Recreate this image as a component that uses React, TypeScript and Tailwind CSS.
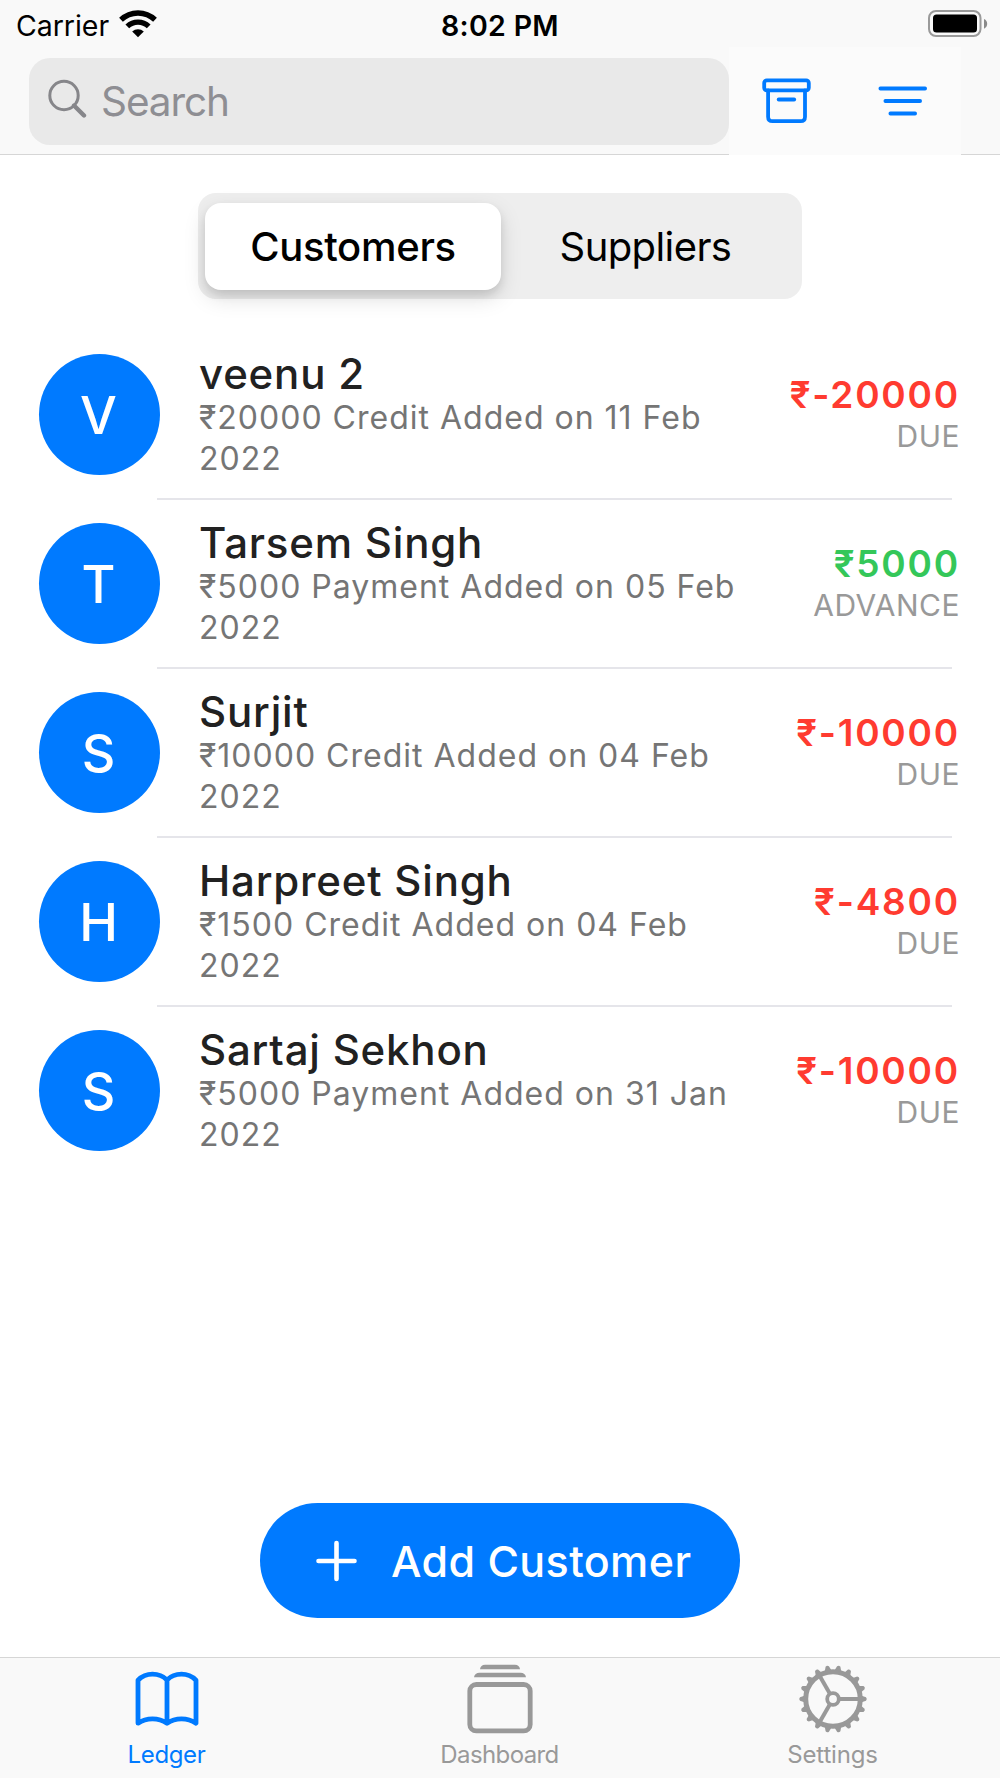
import { clsx } from 'clsx';

interface Customer {
  name: string;
  note: string;
  amount: string;
  status: 'DUE' | 'ADVANCE';
}

const customers: Customer[] = [
  { name: 'veenu 2', note: '₹20000 Credit Added on 11 Feb 2022', amount: '₹-20000', status: 'DUE' },
  { name: 'Tarsem Singh', note: '₹5000 Payment Added on 05 Feb 2022', amount: '₹5000', status: 'ADVANCE' },
  { name: 'Surjit', note: '₹10000 Credit Added on 04 Feb 2022', amount: '₹-10000', status: 'DUE' },
  { name: 'Harpreet Singh', note: '₹1500 Credit Added on 04 Feb 2022', amount: '₹-4800', status: 'DUE' },
  { name: 'Sartaj Sekhon', note: '₹5000 Payment Added on 31 Jan 2022', amount: '₹-10000', status: 'DUE' },
];

const gearTeeth = Array.from({ length: 18 }, (_, i) => i * 20);

function WifiIcon() {
  return (
    <svg width="38" height="28" viewBox="0 0 38 28" fill="none" stroke="#000">
      <path d="M2 9.8 A24.5 24.5 0 0 1 36 9.8" strokeWidth="5.4" />
      <path d="M8.3 16.4 A15.5 15.5 0 0 1 29.7 16.4" strokeWidth="5.4" />
      <path d="M13.2 21.5 A8.6 8.6 0 0 1 24.8 21.5 L19 27.2 Z" fill="#000" stroke="none" />
    </svg>
  );
}

function BatteryIcon() {
  return (
    <svg width="60" height="28" viewBox="0 0 60 28">
      <rect x="1" y="1" width="51.5" height="25" rx="7" fill="none" stroke="#9a9a9a" strokeWidth="2" />
      <rect x="5" y="4.5" width="44" height="18" rx="3.5" fill="#000" />
      <path d="M56 9 Q59.2 10.5 59.2 13.8 Q59.2 17.2 56 18.7 Z" fill="#8a8a8a" />
    </svg>
  );
}

function SearchIcon() {
  return (
    <svg width="40" height="40" viewBox="0 0 40 40" fill="none" stroke="#86868a" strokeLinecap="round">
      <circle cx="17" cy="16.5" r="14.2" strokeWidth="3" />
      <path d="M27 26.5 L37 36.5" strokeWidth="4.4" />
    </svg>
  );
}

function ArchiveIcon() {
  return (
    <svg width="50" height="46" viewBox="0 0 50 46" fill="none" stroke="#007aff" strokeWidth="3.8" strokeLinecap="round">
      <rect x="2.2" y="2.4" width="44.6" height="10" rx="2.6" />
      <path d="M6.1 12.4 V38.7 Q6.1 43.2 10.6 43.2 H38.6 Q43 43.2 43 38.7 V12.4" />
      <path d="M16.7 21.5 H32.2" />
    </svg>
  );
}

function FilterIcon() {
  return (
    <svg width="50" height="30" viewBox="0 0 50 30" fill="none" stroke="#007aff" strokeWidth="3.8" strokeLinecap="round">
      <path d="M2.4 2.5 H47.1 M7.4 15 H42.1 M12.4 27.5 H37.1" />
    </svg>
  );
}

function BookIcon() {
  return (
    <svg width="64" height="56" viewBox="0 0 64 56" fill="none" stroke="#007aff" strokeWidth="4.8" strokeLinejoin="round">
      <path d="M32 9 C28 5 23 3.2 17.5 3.2 C12 3.2 7 5.2 3 9.2 V52.2 C7 49.4 12 47.8 17.5 47.8 C23 47.8 28 49.4 32 52.2 C36 49.4 41 47.8 46.5 47.8 C52 47.8 57 49.4 61 52.2 V9.2 C57 5.2 52 3.2 46.5 3.2 C41 3.2 36 5 32 9 Z M32 9 V52" />
    </svg>
  );
}

function StackIcon() {
  return (
    <svg width="66" height="70" viewBox="0 0 66 70" fill="#999">
      <path d="M13 5.3 Q13.6 .8 18 .8 H48 Q52.4 .8 53 5.3 Z" />
      <path d="M7 13.3 Q7.8 8.8 12.5 8.8 H53.5 Q58.2 8.8 59 13.3 Z" />
      <rect x="2.8" y="20.5" width="60.4" height="46.4" rx="6.5" fill="none" stroke="#999" strokeWidth="4.8" />
    </svg>
  );
}

function GearIcon() {
  return (
    <svg width="70" height="70" viewBox="-35 -35 70 70" fill="none" stroke="#999">
      <circle r="27.3" strokeWidth="5" />
      <circle r="5.8" strokeWidth="3.8" />
      {[0, 120, 240].map((angle) => (
        <path key={angle} d="M7 0 H26" strokeWidth="4" transform={`rotate(${angle})`} />
      ))}
      {gearTeeth.map((angle) => (
        <path key={angle} d="M28 -3.6 L33 -1.7 Q34.6 0 33 1.7 L28 3.6 Z" fill="#999" stroke="none" transform={`rotate(${angle})`} />
      ))}
    </svg>
  );
}

function StatusBar() {
  return (
    <div className="grid h-[47px] grid-cols-3 items-center pr-[12px] pl-[16px] text-[28.5px] leading-[40px]">
      <div className="flex items-center gap-[10px]">
        <span className="pt-[4px] tracking-[-0.05px]">Carrier</span>
        <WifiIcon />
      </div>
      <span className="pt-[4px] pr-[4px] text-center font-semibold tracking-[0.3px]">8:02 PM</span>
      <div className="flex justify-end pt-[1px]">
        <BatteryIcon />
      </div>
    </div>
  );
}

function Header() {
  return (
    <header className="h-[155px] bg-[#f9f9f9]">
      <StatusBar />
      <div className="flex h-[108px]">
        <div className="w-[729px] border-b border-[#d6d6d6] pt-[11px] pl-[29px]">
          <div className="flex h-[87px] items-center rounded-[21px] bg-[#e9e9e9] pl-[18px] text-[#8e8e93]">
            <div className="-mt-[6px]">
              <SearchIcon />
            </div>
            <span className="ml-[14px] pt-[2px] text-[40.5px] tracking-[-1.1px]">Search</span>
          </div>
        </div>
        <div className="flex w-[232px] items-center bg-[#fbfbfb] pl-[33px]">
          <ArchiveIcon />
          <div className="ml-[66px]">
            <FilterIcon />
          </div>
        </div>
        <div className="flex-1 border-b border-[#d6d6d6]" />
      </div>
    </header>
  );
}

function Segments() {
  return (
    <div className="mx-auto mt-[38px] flex h-[106px] w-[604px] items-center rounded-[18px] bg-[#eee] px-[7px] text-[40px] text-black">
      <button className="h-[87px] w-[296px] rounded-[16px] bg-white pt-[2px] font-medium tracking-[-0.3px] shadow-[0_8px_22px_rgba(0,0,0,0.13),0_5px_8px_rgba(0,0,0,0.1)]">
        Customers
      </button>
      <button className="h-[87px] flex-1 pt-[2px] pr-[5px] tracking-[-0.6px]">Suppliers</button>
    </div>
  );
}

function CustomerRow({ customer, last }: { customer: Customer; last: boolean }) {
  return (
    <li className="flex h-[169px] pl-[39px]">
      <div className="flex w-[118px] shrink-0 items-center pb-[2px]">
        <div className="flex size-[121px] shrink-0 items-center justify-center rounded-full bg-[#007aff] pt-[3px] pr-[2px] text-[52px] font-medium text-white">
          {customer.name[0].toUpperCase()}
        </div>
      </div>
      <div
        className={clsx(
          'mr-[48px] flex flex-1 items-center justify-between border-b-2 pl-[42px]',
          last ? 'border-transparent' : 'border-[#e5e5ea]',
        )}
      >
        <div className="w-[550px]">
          <p className="text-[42px] leading-[47px] font-medium tracking-[0.8px] text-[#212121]">{customer.name}</p>
          <p className="text-[32px] leading-[41px] tracking-[1px] text-[#757575]">{customer.note}</p>
        </div>
        <div className="-mr-[8px] pt-[2px] text-right whitespace-nowrap">
          <p
            className={clsx(
              'text-[37px] leading-[42px] font-semibold tracking-[1.8px]',
              customer.status === 'DUE' ? 'text-[#ff3b30]' : 'text-[#34c759]',
            )}
          >
            {customer.amount}
          </p>
          <p className="text-[30px] leading-[41px] tracking-[0.5px] text-[#999]">{customer.status}</p>
        </div>
      </div>
    </li>
  );
}

function TabBar() {
  return (
    <nav className="grid h-[121px] grid-cols-3 border-t border-[#d6d6d6] bg-[#f9f9f9] pr-[1px] text-[24px] leading-[30px] text-[#999]">
      <div className="flex flex-col items-center tracking-[-0.35px] text-[#007aff]">
        <div className="flex h-[82px] items-center">
          <BookIcon />
        </div>
        Ledger
      </div>
      <div className="flex flex-col items-center tracking-[-0.6px]">
        <div className="flex h-[82px] items-center">
          <StackIcon />
        </div>
        Dashboard
      </div>
      <div className="flex flex-col items-center tracking-[-0.2px]">
        <div className="flex h-[82px] items-center">
          <GearIcon />
        </div>
        Settings
      </div>
    </nav>
  );
}

export default function App() {
  return (
    <div className="flex h-[1778px] w-[1000px] flex-col overflow-hidden bg-white font-[Inter,'Noto_Sans',sans-serif] text-black">
      <Header />
      <Segments />
      <ul className="mt-[32px]">
        {customers.map((customer, i) => (
          <CustomerRow key={customer.name} customer={customer} last={i === customers.length - 1} />
        ))}
      </ul>
      <button className="mx-auto mt-auto mb-[39px] flex h-[115px] w-[480px] items-center rounded-full bg-[#007aff] pl-[55px] text-white">
        <svg width="42" height="42" viewBox="0 0 42 42" stroke="currentColor" strokeWidth="4.6" strokeLinecap="round">
          <path d="M21.5 3 V39 M3.5 21 H39.5" />
        </svg>
        <span className="ml-[34px] pt-[2px] text-[43px] font-medium tracking-[0.4px]">Add Customer</span>
      </button>
      <TabBar />
    </div>
  );
}
